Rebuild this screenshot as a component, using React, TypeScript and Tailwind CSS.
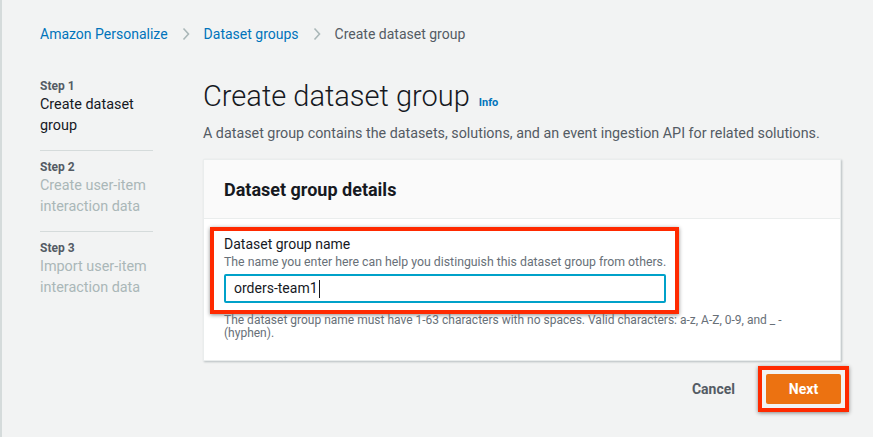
import React from "react";

const font = { fontFamily: "Roboto, 'Open Sans', sans-serif" };

function Chevron() {
  return (
    <svg width="8" height="14" viewBox="0 0 8 14" className="mx-[14px] shrink-0">
      <path d="M1.5 1.5 L6.5 7 L1.5 12.5" fill="none" stroke="#aab7b8" strokeWidth="1.6" />
    </svg>
  );
}

const steps = [
  { n: "Step 1", label: "Create dataset group", active: true },
  { n: "Step 2", label: "Create user-item interaction data", active: false },
  { n: "Step 3", label: "Import user-item interaction data", active: false },
];

export default function App() {
  return (
    <div className="w-full min-h-[437px] bg-[#f2f3f3] border-l-2 border-[#d5dbdb] pl-[38px] pr-[32px] pt-[24px]" style={font}>
      <nav className="flex items-center h-5 text-[14px]">
        <a className="text-[#0073bb]">Amazon Personalize</a>
        <Chevron />
        <a className="text-[#0073bb]">Dataset groups</a>
        <Chevron />
        <span className="text-[#545b64]">Create dataset group</span>
      </nav>

      <div className="flex mt-[33px]">
        <ul className="w-[113px] shrink-0 pt-px">
          {steps.map((s, i) => (
            <li key={s.n} className={`${i > 0 ? "pt-2" : ""} ${i < steps.length - 1 ? "pb-[14px] border-b border-[#d5dbdb]" : ""}`}>
              <div className="text-[12px] leading-4 font-bold text-[#545b64]">{s.n}</div>
              <div className={`text-[14.4px] leading-[21px] ${s.active ? "text-[#16191f]" : "text-[#aab7b8]"}`}>{s.label}</div>
            </li>
          ))}
        </ul>

        <main className="ml-[50px] flex-1">
          <div className="flex items-baseline mt-px">
            <h1 className="text-[29px] leading-[36px] font-light text-[#16191f]">Create dataset group</h1>
            <a className="ml-[9px] text-[11px] font-bold text-[#0073bb]">Info</a>
          </div>
          <p className="mt-[9px] text-[14.3px] leading-5 text-[#545b64]">
            A dataset group contains the datasets, solutions, and an event ingestion API for related solutions.
          </p>

          <section className="mt-4 bg-white border border-[#eaeded] shadow-[1px_1px_2px_rgba(0,28,36,0.25)]">
            <div className="bg-[#fafafa] border-b border-[#eaeded] px-5 pt-[18px] pb-4">
              <h2 className="text-[18px] leading-6 font-bold text-[#16191f]">Dataset group details</h2>
            </div>
            <div className="px-5 pt-2 pb-5">
              <div className="-mx-[14px] border-4 border-[#ff2a00] shadow-[0_1px_4px_rgba(0,0,0,0.45)] pl-[10px] pr-[9px] pt-[3px] pb-[7px] w-[469px]">
                <label className="block text-[14px] leading-5 text-[#16191f]">Dataset group name</label>
                <div className="text-[12.3px] leading-4 text-[#687078] whitespace-nowrap">
                  The name you enter here can help you distinguish this dataset group from others.
                </div>
                <div className="mt-1 h-[29px] border-2 border-[#00a1c9] rounded-[2px] bg-white flex items-center pl-2">
                  <span className="text-[14px] text-[#16191f]">orders-team1</span>
                  <span className="w-px h-[18px] bg-[#16191f] ml-px" />
                </div>
              </div>
              <p className="text-[12px] leading-[13px] text-[#687078] w-[590px]">
                The dataset group name must have 1-63 characters with no spaces. Valid characters: a-z, A-Z, 0-9, and _ -
                <br />
                (hyphen).
              </p>
            </div>
          </section>

          <div className="flex justify-end items-center mt-[5px]">
            <button className="text-[14px] font-bold text-[#545b64] mr-[23px]">Cancel</button>
            <div className="border-4 border-[#ff2a00] shadow-[0_1px_4px_rgba(0,0,0,0.45)] p-1 -mr-2">
              <button className="w-[75px] h-[30px] bg-[#ec7211] rounded-[2px] text-white text-[14px] font-bold">Next</button>
            </div>
          </div>
        </main>
      </div>
    </div>
  );
}
